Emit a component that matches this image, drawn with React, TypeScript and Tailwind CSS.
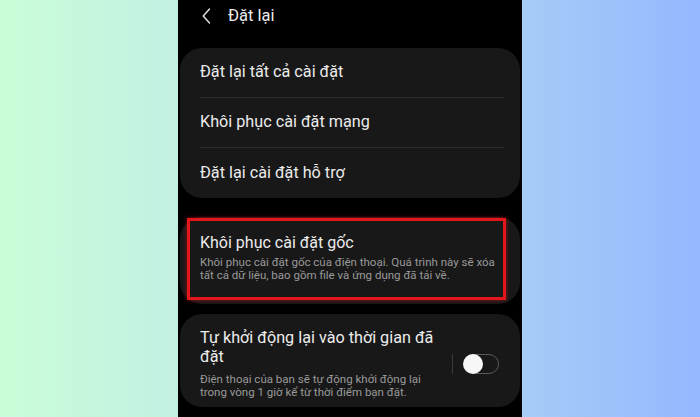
import React, { FC } from "react";

const rows = [
  "Đặt lại tất cả cài đặt",
  "Khôi phục cài đặt mạng",
  "Đặt lại cài đặt hỗ trợ",
];

const BackIcon: FC = () => (
  <svg width="9" height="16" viewBox="0 0 9 16" fill="none">
    <path
      d="M7.5 1 L1.2 8 L7.5 15"
      stroke="#e6e6e6"
      strokeWidth="1.4"
      strokeLinecap="round"
      strokeLinejoin="round"
    />
  </svg>
);

const Toggle: FC = () => (
  <div className="flex h-[20px] w-[35px] items-center rounded-full border-[1.5px] border-[#5a5a5a]">
    <div className="-ml-[2px] h-[20px] w-[20px] rounded-full bg-[#f7f7f7]" />
  </div>
);

const App: FC = () => {
  return (
    <div
      className="flex h-[417px] w-full justify-center overflow-hidden bg-[linear-gradient(90deg,#c9fdd8_0%,#c3f0e2_25%,#a6cbf7_75%,#93b8fe_100%)]"
      style={{ fontFamily: 'Roboto, "Noto Sans", sans-serif' }}
    >
      <div className="flex h-full w-[344px] flex-col bg-black px-[2px]">
        {/* header */}
        <div className="flex h-[48px] items-start gap-[17px] pl-[22px] pt-[6px]">
          <div className="flex h-[20px] items-center">
            <BackIcon />
          </div>
          <span className="text-[16.5px] leading-[20px] text-[#ececec]">
            Đặt lại
          </span>
        </div>

        {/* reset list */}
        <div className="rounded-[22px] bg-[#181818]">
          {rows.map((row, i) => (
            <div key={row} className="pl-[20px] pr-[16px]">
              <div
                className={`flex h-[50px] items-center text-[16.2px] text-[#ececec] ${
                  i < rows.length - 1 ? "border-b border-[#2a2a2a]" : ""
                }`}
              >
                {row}
              </div>
            </div>
          ))}
        </div>

        {/* factory reset */}
        <div className="relative mt-[19px] rounded-[22px] bg-[#181818] pb-[22px] pl-[20px] pr-[18px] pt-[16px]">
          <p className="text-[16px] leading-[20px] text-[#ececec]">
            Khôi phục cài đặt gốc
          </p>
          <p className="mt-[3px] text-[11.5px] leading-[13px] text-[#9a9a9a]">
            Khôi phục cài đặt gốc của điện thoại. Quá trình này sẽ xóa tất cả
            dữ liệu, bao gồm file và ứng dụng đã tải về.
          </p>
          <div className="pointer-events-none absolute left-[7px] right-[14px] top-[1px] bottom-[4px] border-[3px] border-[#e3161c] shadow-[0_0_4px_rgba(227,22,28,0.6)]" />
        </div>

        {/* scheduled restart */}
        <div className="mt-[10px] flex items-center rounded-[22px] bg-[#181818] pb-[8px] pl-[20px] pr-[21px] pt-[14px]">
          <div className="w-[245px]">
            <p className="text-[16.2px] leading-[19px] text-[#ececec]">
              Tự khởi động lại vào thời gian đã đặt
            </p>
            <p className="mt-[7px] text-[11.5px] leading-[13px] text-[#9a9a9a]">
              Điện thoại của bạn sẽ tự động khởi động lại trong vòng 1 giờ kể
              từ thời điểm bạn đặt.
            </p>
          </div>
          <div className="ml-auto flex items-center gap-[11px]">
            <div className="h-[20px] w-px bg-[#3a3a3a]" />
            <Toggle />
          </div>
        </div>
      </div>
    </div>
  );
};

export default App;
